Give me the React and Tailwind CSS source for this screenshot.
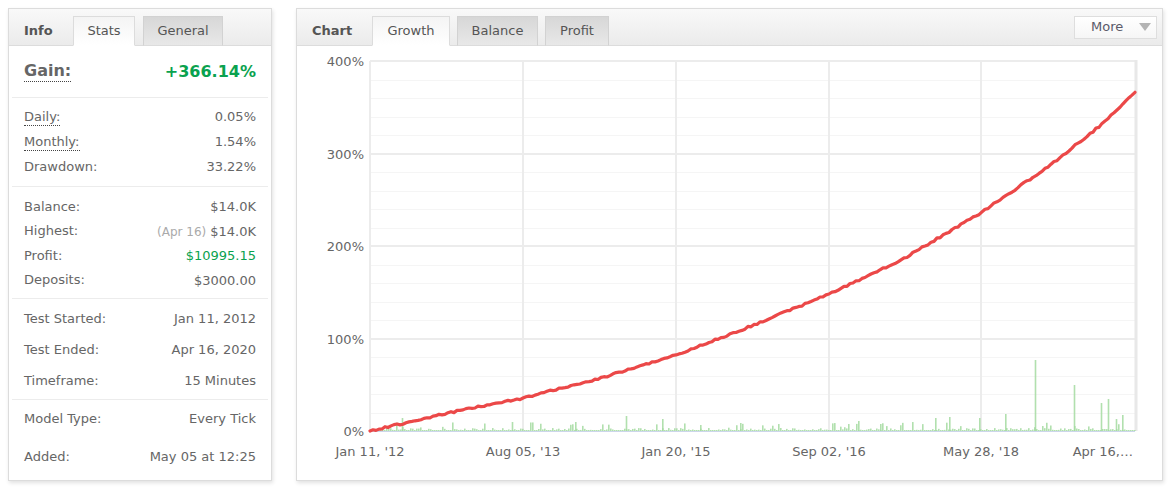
import React from 'react';

// deterministic noise so the chart looks the same on every run
const rng = (seed) => () => {
  seed = (seed * 1664525 + 1013904223) % 4294967296;
  return seed / 4294967296;
};

const FONT = { fontFamily: '"DejaVu Sans", Verdana, sans-serif' };

/* Growth key points: [px from plot left, value %] */
const KEYS = [
  [0, 0], [80, 20], [153, 35.6], [230, 57], [306, 82], [380, 113],
  [459, 148], [530, 184], [611, 236], [680, 287], [730, 330], [765, 366],
];

const PLOT = { left: 73, right: 838, top: 15, bottom: 385 };
const PER100 = (PLOT.bottom - PLOT.top) / 4;

const growthPath = () => {
  const r = rng(7);
  const out = [];
  for (let x = 0; x <= 765; x += 3) {
    let i = 0;
    while (i < KEYS.length - 2 && KEYS[i + 1][0] < x) i++;
    const [x0, v0] = KEYS[i];
    const [x1, v1] = KEYS[i + 1];
    const v = v0 + ((v1 - v0) * (x - x0)) / (x1 - x0);
    const jitter = x === 0 ? 0 : (r() - 0.5) * 1.8;
    out.push(`${(PLOT.left + x).toFixed(1)},${(PLOT.bottom - (v * PER100) / 100 + jitter).toFixed(1)}`);
  }
  return 'M' + out.join(' L');
};

const SPIKES = [
  [1034.7, 71], [1073.7, 46], [1100.7, 28], [1107.7, 32], [1005, 17], [949, 14],
  [935, 13], [979, 13], [1122, 16], [1115.7, 12], [625.7, 15], [575, 9],
  [662, 12], [401.7, 13], [511.7, 9], [858, 10], [880, 7], [740, 8], [700, 6],
];

const bars = () => {
  const r = rng(42);
  const list = [];
  for (let x = 372; x < 1135; x += 2) {
    const p = r();
    let h = 1;
    if (p > 0.5) h = 1 + r() * 2;
    if (p > 0.88) h = 3 + r() * 6;
    list.push([x, h]);
  }
  SPIKES.forEach(([x, h]) => list.push([x, h]));
  return list;
};

const GrowthChart = () => {
  const barList = bars();
  const xLabels = [
    [73, "Jan 11, '12", 'middle'],
    [226, "Aug 05, '13", 'middle'],
    [379, "Jan 20, '15", 'middle'],
    [532, "Sep 02, '16", 'middle'],
    [684, "May 28, '18", 'middle'],
    [836, 'Apr 16,…', 'end'],
  ];
  return (
    <svg width="864" height="430" viewBox="0 0 864 430" className="block" style={FONT}>
      {/* minor horizontal grid every 20% */}
      {Array.from({ length: 21 }).map((_, i) => {
        const y = Math.round(PLOT.top + (i * PER100) / 5) + 0.5;
        return i % 5 === 0 ? null : (
          <line key={'m' + i} x1={PLOT.left} x2={PLOT.right} y1={y} y2={y} stroke="#f5f5f5" strokeWidth="1" />
        );
      })}
      {[0, 1, 2, 3].map((i) => {
        const y = Math.round(PLOT.top + i * PER100);
        return <line key={'h' + i} x1={PLOT.left} x2={PLOT.right} y1={y} y2={y} stroke="#ececec" strokeWidth="2" />;
      })}
      {[PLOT.left, 226, 379, 532, 684].map((x) => (
        <line key={'v' + x} x1={x} x2={x} y1={PLOT.top} y2={PLOT.bottom} stroke="#ececec" strokeWidth="2" />
      ))}
      <line x1={PLOT.right + 1} x2={PLOT.right + 1} y1={PLOT.top - 1} y2={PLOT.bottom} stroke="#e8e8e8" strokeWidth="3" />

      {/* profit bars */}
      {barList.map(([px, h], i) => (
        <rect key={'b' + i} x={px - 297} y={PLOT.bottom - h} width="1.6" height={h} fill="#a3dba0" opacity="0.85" />
      ))}
      <line x1={PLOT.left} x2={PLOT.right} y1={PLOT.bottom + 0.5} y2={PLOT.bottom + 0.5} stroke="#ccd6eb" strokeWidth="1" />

      <path d={growthPath()} fill="none" stroke="#eb4848" strokeWidth="3.2" strokeLinejoin="round" strokeLinecap="round" />

      {['400%', '300%', '200%', '100%', '0%'].map((t, i) => (
        <text key={t} x="67" y={PLOT.top + i * PER100 + 5} textAnchor="end" fontSize="13" fill="#666">
          {t}
        </text>
      ))}
      {xLabels.map(([x, t, a]) => (
        <text key={t} x={x} y="410" textAnchor={a} fontSize="13" fill="#666">
          {t}
        </text>
      ))}
    </svg>
  );
};

const Tab = ({ label, active, width }) => (
  <div
    className={`-mb-px flex h-[30px] items-center justify-center border text-[13px] ${width} ${
      active
        ? 'border-[#dcdcdc] border-b-white bg-gradient-to-b from-[#f4f4f4] to-white text-[#555]'
        : 'border-[#d2d2d2] border-b-[#dcdcdc] bg-gradient-to-b from-[#d7d7d7] to-[#e8e8e8] text-[#555]'
    }`}
  >
    {label}
  </div>
);

const Header = ({ title, titleWidth, children, right }) => (
  <div className="flex h-[37px] shrink-0 items-end border-b border-[#dcdcdc] bg-gradient-to-b from-[#f9f9f9] to-[#ebebeb]">
    <div className={`flex h-[29px] items-center pl-[15px] text-[13px] font-bold text-[#555] ${titleWidth}`}>{title}</div>
    <div className="flex items-end gap-[7px]">{children}</div>
    {right}
  </div>
);

const Row = ({ label, value, dotted, h = 'h-[25px]', valueClass = 'text-[#666]', note }) => (
  <div className={`flex items-center justify-between pt-px ${h}`}>
    <span className={`text-[#666] leading-[16px] ${dotted ? 'border-b border-dotted border-[#444]' : ''}`}>{label}</span>
    <span className={valueClass}>
      {note && <span className="mr-[4px] text-[12px] text-[#aaa]">{note}</span>}
      {value}
    </span>
  </div>
);

const Divider = () => <div className="mx-[3px] h-px bg-[#ececec]" />;

export default function App() {
  return (
    <div className="flex gap-[24px] bg-white p-[8px]" style={FONT}>
      {/* Info panel */}
      <div className="flex h-[473px] w-[264px] shrink-0 flex-col border border-[#dcdcdc] bg-white shadow-[1px_2px_4px_rgba(0,0,0,0.12)]">
        <Header title="Info" titleWidth="w-[64px]">
          <Tab label="Stats" active width="w-[62px]" />
          <Tab label="General" width="w-[80px] ml-px" />
        </Header>
        <div className="flex h-[51px] items-center justify-between px-[15px]">
          <span className="border-b border-dotted border-[#444] text-[16px] font-bold leading-[20px] text-[#666]">Gain:</span>
          <span className="text-[16px] font-bold text-[#0aa24f]">+366.14%</span>
        </div>
        <Divider />
        <div className="px-[15px] pt-[6px] pb-[7px] text-[13px]">
          <Row label="Daily:" value="0.05%" dotted />
          <Row label="Monthly:" value="1.54%" dotted />
          <Row label="Drawdown:" value="33.22%" />
        </div>
        <Divider />
        <div className="px-[15px] pt-[7px] pb-[6px] text-[13px]">
          <Row label="Balance:" value="$14.0K" h="h-[24.5px]" />
          <Row label="Highest:" value="$14.0K" note="(Apr 16)" h="h-[24.5px]" />
          <Row label="Profit:" value="$10995.15" valueClass="text-[#0aa24f]" h="h-[24.5px]" />
          <Row label="Deposits:" value="$3000.00" h="h-[24.5px]" />
        </div>
        <Divider />
        <div className="px-[15px] py-[3.5px] text-[13px]">
          <Row label="Test Started:" value="Jan 11, 2012" h="h-[31px]" />
          <Row label="Test Ended:" value="Apr 16, 2020" h="h-[31px]" />
          <Row label="Timeframe:" value="15 Minutes" h="h-[31px]" />
        </div>
        <Divider />
        <div className="px-[15px] text-[13px]">
          <Row label="Model Type:" value="Every Tick" h="h-[37px]" />
          <Row label="Added:" value="May 05 at 12:25" h="h-[38px]" />
        </div>
      </div>

      {/* Chart panel */}
      <div className="flex h-[473px] flex-1 flex-col border border-[#dcdcdc] bg-white shadow-[1px_2px_4px_rgba(0,0,0,0.12)]">
        <Header
          title="Chart"
          titleWidth="w-[75px]"
          right={
            <div className="ml-auto mr-[5px] flex h-[23px] w-[83px] items-center self-center border border-[#dedede] bg-gradient-to-b from-white to-[#f6f6f6] pl-[16px] text-[13px] text-[#5a5a6a]">
              More
              <svg width="12" height="8" viewBox="0 0 12 8" className="ml-auto mr-[5px]">
                <path d="M0 0 L12 0 L6 8 Z" fill="#b4b4b4" />
              </svg>
            </div>
          }
        >
          <Tab label="Growth" active width="w-[78px]" />
          <Tab label="Balance" width="w-[81px]" />
          <Tab label="Profit" width="w-[64px]" />
        </Header>
        <GrowthChart />
      </div>
    </div>
  );
}
